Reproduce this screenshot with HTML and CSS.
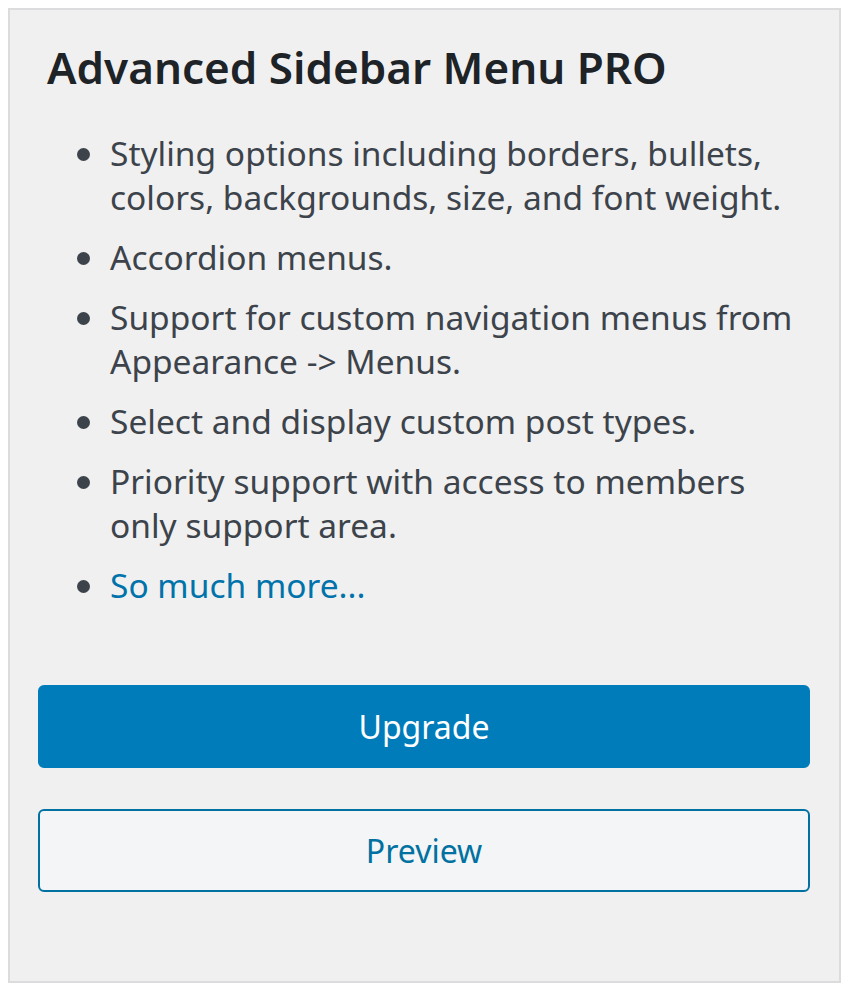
FILE: index.html
```html
<!DOCTYPE html>
<html lang="en">
<head>
<meta charset="utf-8">
<title>Advanced Sidebar Menu PRO</title>
<link rel="stylesheet" href="styles.css">
</head>
<body>
<div class="panel">
  <h2 class="title">Advanced Sidebar Menu PRO</h2>
  <ul class="features">
    <li>Styling options including borders, bullets, colors, backgrounds, size, and font weight.</li>
    <li>Accordion menus.</li>
    <li>Support for custom navigation menus from Appearance -&gt; Menus.</li>
    <li>Select and display custom post types.</li>
    <li>Priority support with access to members only support area.</li>
    <li><a href="#" class="more">So much more...</a></li>
  </ul>
  <div class="actions">
    <a href="#" class="btn btn-primary">Upgrade</a>
    <a href="#" class="btn btn-secondary">Preview</a>
  </div>
</div>
</body>
</html>
```

FILE: styles.css
```css
html, body {
  margin: 0;
  padding: 0;
  background: #ffffff;
}
body {
  padding: 8px;
  font-family: "Noto Sans", "Open Sans", sans-serif;
}
.panel {
  box-sizing: border-box;
  width: 833px;
  height: 975px;
  border: 2px solid #dcdcde;
  background: #f0f0f1;
  padding: 32px 29px 0 28px;
  display: flex;
  flex-direction: column;
}
.title {
  margin: 0 0 39px 9px;
  font-size: 44px;
  line-height: 50px;
  font-weight: 600;
  color: #1d2327;
}
.features {
  list-style: none;
  margin: 0;
  padding: 0 0 0 72px;
  font-size: 33.5px;
  line-height: 44px;
  color: #3c434a;
}
.features li {
  position: relative;
  margin-bottom: 16px;
}
.features li::before {
  content: "";
  position: absolute;
  left: -33px;
  top: 17px;
  width: 13px;
  height: 13px;
  border-radius: 50%;
  background: #3c434a;
}
.more {
  color: #0073aa;
  text-decoration: none;
}
.actions {
  margin-top: 62px;
  display: flex;
  flex-direction: column;
  gap: 41px;
}
.btn {
  box-sizing: border-box;
  display: flex;
  align-items: center;
  justify-content: center;
  height: 83px;
  border-radius: 6px;
  font-size: 32px;
  text-decoration: none;
}
.btn-primary {
  background: #007cba;
  color: #ffffff;
  border: 2px solid #007cba;
}
.btn-secondary {
  background: #f3f5f6;
  color: #0071a1;
  border: 2px solid #0071a1;
}
```
